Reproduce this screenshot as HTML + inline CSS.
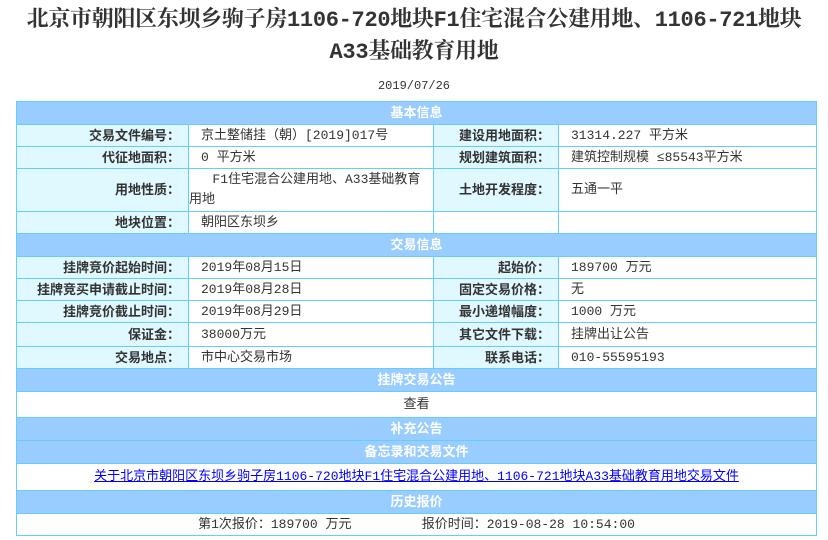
<!DOCTYPE html>
<html><head><meta charset="utf-8"><style>
body{margin:0;background:#fff;width:828px;height:540px;overflow:hidden;font-family:"Liberation Sans","Noto Sans CJK SC",sans-serif;color:#333}
h1{position:absolute;left:0;top:5px;width:828px;margin:0;text-align:center;font-size:22px;line-height:32px;font-weight:bold;color:#333;font-family:"Liberation Mono","Noto Serif CJK SC",serif;letter-spacing:-0.3px}
.date{position:absolute;top:79px;width:828px;text-align:center;font-size:12px;color:#333;font-family:"Liberation Mono",monospace}
table{position:absolute;left:16px;top:101px;width:800px;border-collapse:collapse;table-layout:fixed;font-size:13px}
td{border:1px solid #66ccff;padding:0 6px;line-height:16px;height:21px;font-family:"Liberation Mono","Noto Sans CJK SC",monospace}
.h td{background:#99ccff;color:#fff;font-weight:bold;text-align:center;height:22px;font-family:"Liberation Sans","Noto Sans CJK SC",sans-serif}
.l{background:#e0f8ff;text-align:right;font-weight:bold;padding-right:8px;font-family:"Liberation Sans","Noto Sans CJK SC",sans-serif !important}
.v{padding-left:12px}
a{color:#00f}
</style></head><body>
<h1>北京市朝阳区东坝乡驹子房1106-720地块F1住宅混合公建用地、1106-721地块<br>A33基础教育用地</h1>
<div class="date">2019/07/26</div>
<table>
<colgroup><col style="width:172px"><col style="width:245px"><col style="width:125px"><col style="width:258px"></colgroup>
<tr class="h"><td colspan="4">基本信息</td></tr>
<tr><td class="l">交易文件编号：</td><td class="v">京土整储挂（朝）[2019]017号</td><td class="l">建设用地面积：</td><td class="v">31314.227 平方米</td></tr>
<tr><td class="l">代征地面积：</td><td class="v">0 平方米</td><td class="l">规划建筑面积：</td><td class="v">建筑控制规模 ≤85543平方米</td></tr>
<tr><td class="l" style="height:42px">用地性质：</td><td style="padding-left:0;line-height:20px">&nbsp;&nbsp;&nbsp;F1住宅混合公建用地、A33基础教育用地</td><td class="l">土地开发程度：</td><td class="v">五通一平</td></tr>
<tr><td class="l">地块位置：</td><td class="v">朝阳区东坝乡</td><td></td><td></td></tr>
<tr class="h"><td colspan="4">交易信息</td></tr>
<tr><td class="l">挂牌竞价起始时间：</td><td class="v">2019年08月15日</td><td class="l">起始价：</td><td class="v">189700 万元</td></tr>
<tr><td class="l">挂牌竞买申请截止时间：</td><td class="v">2019年08月28日</td><td class="l">固定交易价格：</td><td class="v">无</td></tr>
<tr><td class="l">挂牌竞价截止时间：</td><td class="v">2019年08月29日</td><td class="l">最小递增幅度：</td><td class="v">1000 万元</td></tr>
<tr><td class="l" style="height:23px">保证金：</td><td class="v">38000万元</td><td class="l">其它文件下载：</td><td class="v">挂牌出让公告</td></tr>
<tr><td class="l">交易地点：</td><td class="v">市中心交易市场</td><td class="l">联系电话：</td><td class="v">010-55595193</td></tr>
<tr class="h"><td colspan="4">挂牌交易公告</td></tr>
<tr><td colspan="4" style="text-align:center;height:25px">查看</td></tr>
<tr class="h"><td colspan="4">补充公告</td></tr>
<tr class="h"><td colspan="4">备忘录和交易文件</td></tr>
<tr><td colspan="4" style="text-align:center;height:26px"><a href="#">关于北京市朝阳区东坝乡驹子房1106-720地块F1住宅混合公建用地、1106-721地块A33基础教育用地交易文件</a></td></tr>
<tr class="h"><td colspan="4">历史报价</td></tr>
<tr><td colspan="4" style="text-align:center">第1次报价：189700 万元 &nbsp;&nbsp;&nbsp;&nbsp;&nbsp;&nbsp;&nbsp;&nbsp;报价时间：2019-08-28 10:54:00</td></tr>
</table>
</body></html>
